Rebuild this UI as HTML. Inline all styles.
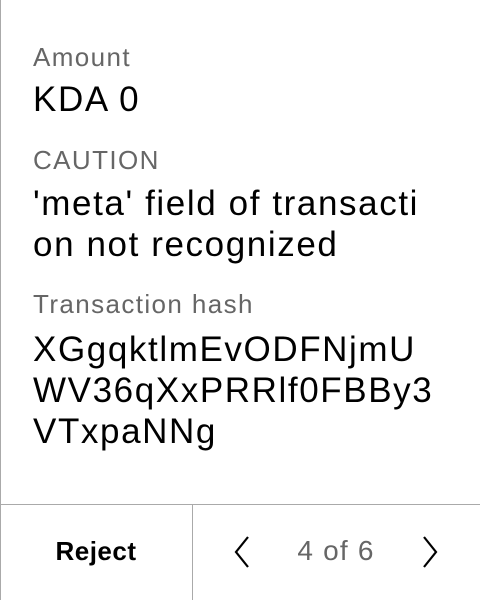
<!DOCTYPE html>
<html><head><style>
body{margin:0;width:480px;height:600px;background:#fff;font-family:"Liberation Sans",sans-serif;position:relative;overflow:hidden}
.l{position:absolute;left:33px;font-size:26px;color:#666;line-height:28px;letter-spacing:1.4px;white-space:nowrap}
.v{position:absolute;left:33px;font-size:35px;color:#000;line-height:41px;width:460px;letter-spacing:1.6px;white-space:nowrap}
</style></head><body>
<div style="position:absolute;left:0;top:0;width:1px;height:600px;background:#aaa"></div>
<div class="l" style="top:43px">Amount</div>
<div class="v" style="top:79px">KDA 0</div>
<div class="l" style="top:146px">CAUTION</div>
<div class="v" style="top:183px">'meta' field of transacti<br>on not recognized</div>
<div class="l" style="top:290px">Transaction hash</div>
<div class="v" style="top:329px">XGgqktlmEvODFNjmU<br>WV36qXxPRRlf0FBBy3<br>VTxpaNNg</div>
<div style="position:absolute;left:0;top:504px;width:480px;height:1px;background:#aaa"></div>
<div style="position:absolute;left:192px;top:504px;width:1px;height:96px;background:#aaa"></div>
<div style="position:absolute;left:0;top:535px;width:192px;text-align:center;font-size:26px;font-weight:bold;line-height:32px;letter-spacing:0.5px">Reject</div>
<div style="position:absolute;left:276px;top:535px;width:120px;text-align:center;font-size:28px;color:#666;line-height:32px;letter-spacing:1.2px">4 of 6</div>
<svg style="position:absolute;left:230px;top:534px" width="24" height="36"><path d="M18 3 L6 18 L18 33" fill="none" stroke="#000" stroke-width="2.2"/></svg>
<svg style="position:absolute;left:418px;top:534px" width="24" height="36"><path d="M6 3 L18 18 L6 33" fill="none" stroke="#000" stroke-width="2.2"/></svg>
</body></html>
